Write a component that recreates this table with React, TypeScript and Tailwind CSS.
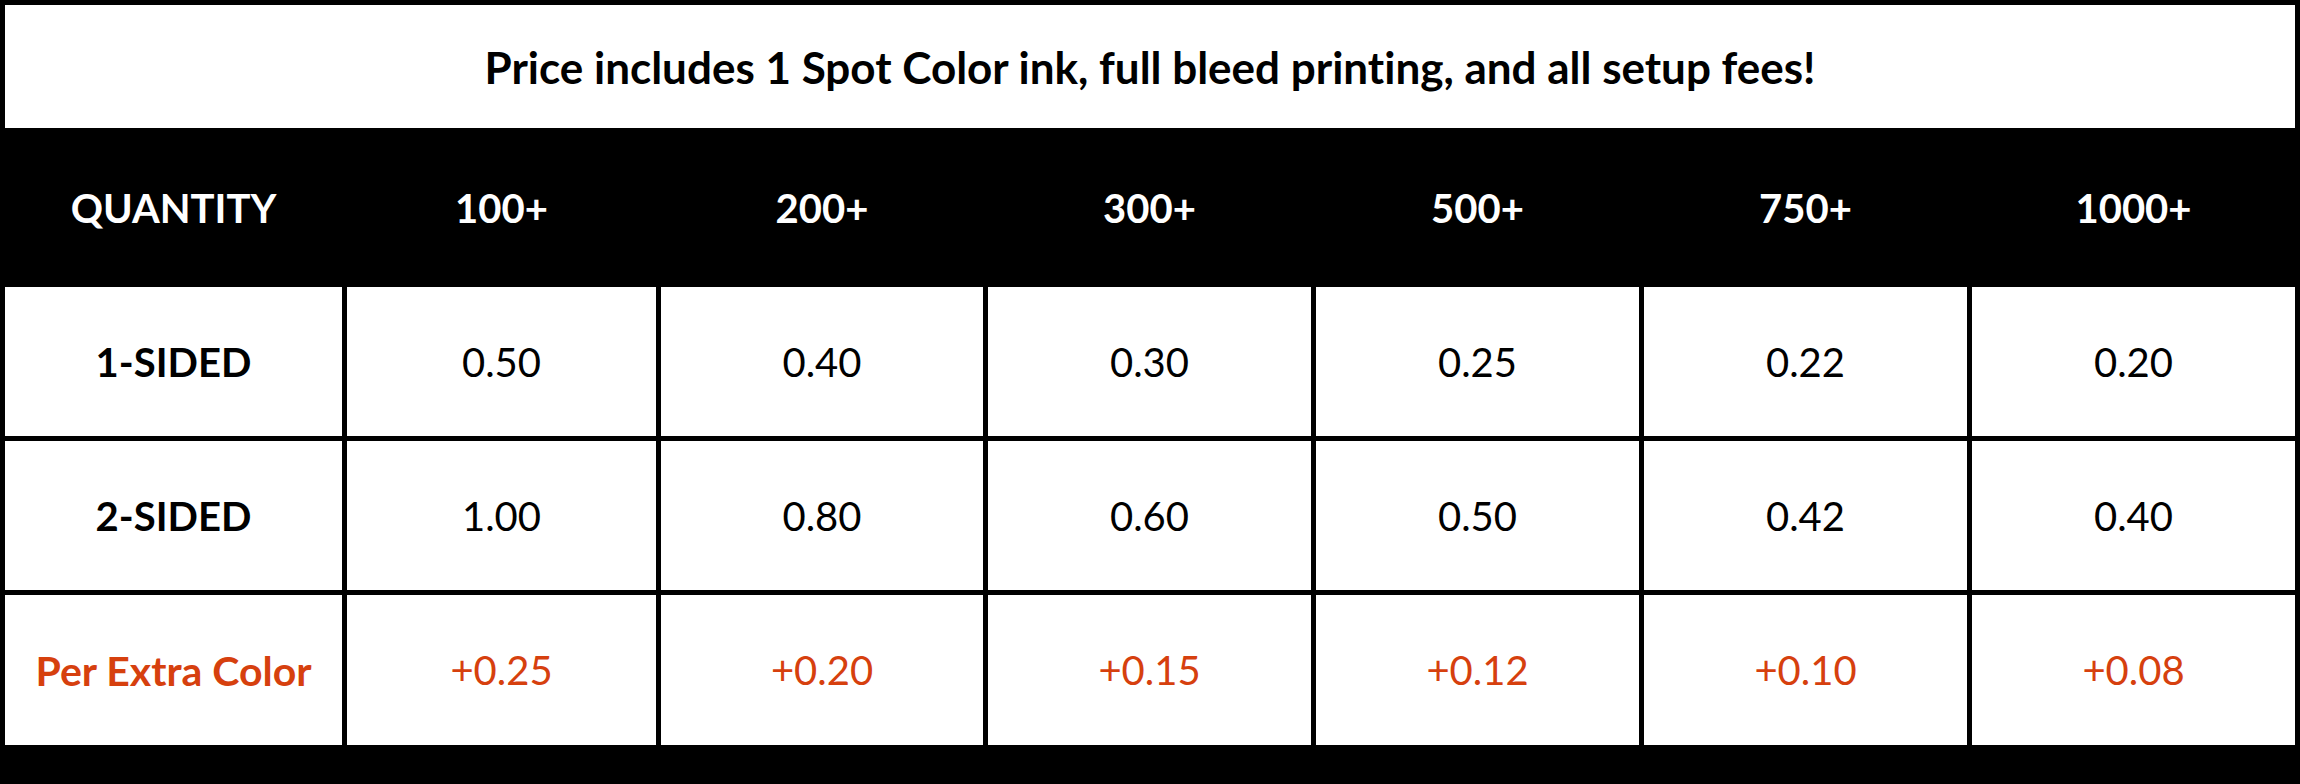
const cols = 'grid grid-cols-[337px_309px_322px_323px_323px_323px_323px] gap-x-[5px]'

const headers = ['QUANTITY', '100+', '200+', '300+', '500+', '750+', '1000+']

const rows = [
  { label: '1-SIDED', values: ['0.50', '0.40', '0.30', '0.25', '0.22', '0.20'], extra: false, h: 'h-[149px]' },
  { label: '2-SIDED', values: ['1.00', '0.80', '0.60', '0.50', '0.42', '0.40'], extra: false, h: 'h-[149px]' },
  { label: 'Per Extra Color', values: ['+0.25', '+0.20', '+0.15', '+0.12', '+0.10', '+0.08'], extra: true, h: 'h-[150px]' },
]

export default function App() {
  return (
    <div className="w-[2300px] h-[784px] bg-black px-[5px] pt-[5px] pb-[39px] font-['Lato',sans-serif] text-[40px] leading-none [font-variant-ligatures:none]">
      {/* banner */}
      <div className="h-[123px] bg-white flex items-center justify-center font-bold text-black text-[44px]">
        Price includes 1 Spot Color ink, full bleed printing, and all setup fees!
      </div>

      {/* header row */}
      <div className={`${cols} h-[159px] items-center text-white font-bold`}>
        {headers.map((h) => (
          <div key={h} className="text-center">{h}</div>
        ))}
      </div>

      {/* price rows */}
      <div className="flex flex-col gap-y-[5px]">
        {rows.map((r) => (
          <div key={r.label} className={`${cols} ${r.h}`}>
            <div className={`bg-white flex items-center justify-center font-bold ${r.extra ? 'text-[#d6400e] text-[41px]' : 'text-black'}`}>
              {r.label}
            </div>
            {r.values.map((v, i) => (
              <div key={i} className={`bg-white flex items-center justify-center ${r.extra ? 'text-[#d6400e]' : 'text-black'}`}>
                {v}
              </div>
            ))}
          </div>
        ))}
      </div>
    </div>
  )
}
